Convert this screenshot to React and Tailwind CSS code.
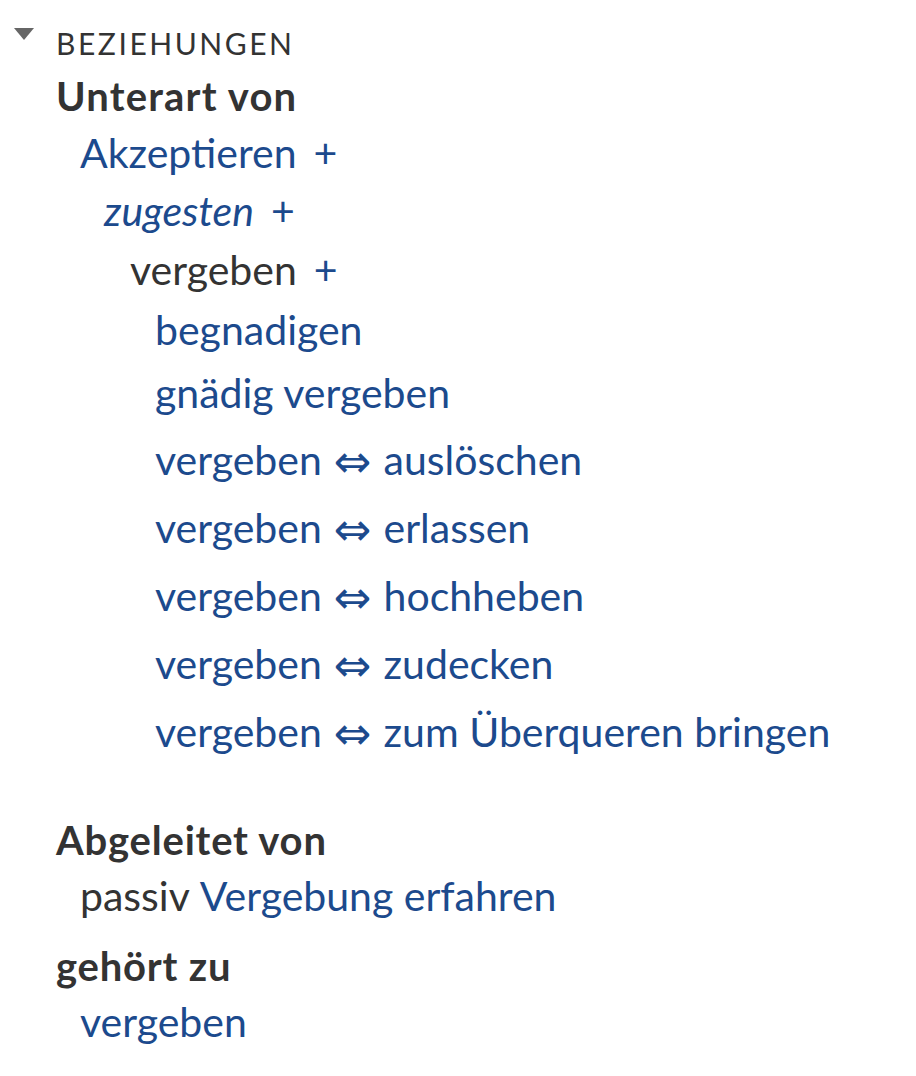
import React from 'react';

const BLUE = 'text-[#1c4a8d]';

// one line of the relation tree, height fixed so rows keep their rhythm
const Row = ({ h, indent, children }) => (
  <div className={`flex items-center whitespace-nowrap ${h} ${indent}`}>{children}</div>
);

const Plus = () => <span className={`${BLUE} ml-[17px]`}>+</span>;

const Arrow = ({ to }) => (
  <span className={`${BLUE} flex items-center`}>
    <span>vergeben</span>
    <span className="font-['DejaVu_Sans'] text-[45px] leading-none mx-[12px] relative top-[1px]">⇔</span>
    <span>{to}</span>
  </span>
);

export default function App() {
  const pairs = ['auslöschen', 'erlassen', 'hochheben', 'zudecken', 'zum Überqueren bringen'];

  return (
    <div className="w-[916px] h-[1076px] bg-white text-[#333333] font-['Lato','Liberation_Sans',sans-serif] text-[41px] pt-[18px]">
      {/* section header with collapse caret */}
      <div className="flex items-center h-[50px]">
        <span className="w-0 h-0 ml-[14px] border-l-[10px] border-r-[10px] border-t-[12px] border-l-transparent border-r-transparent border-t-[#666666] self-start mt-[10px]" />
        <span className="ml-[22px] text-[30px] tracking-[0.085em] text-[#333333]">BEZIEHUNGEN</span>
      </div>

      <div className="pl-[56px]">
        <Row h="h-[56px]" indent="">
          <span className="font-bold text-[40px] tracking-[0.03em]">Unterart von</span>
        </Row>
        <Row h="h-[58px]" indent="pl-[24px]">
          <span className={BLUE}>Akzeptieren</span>
          <Plus />
        </Row>
        <Row h="h-[58px]" indent="pl-[48px]">
          <span className={`${BLUE} italic`}>zugesten</span>
          <Plus />
        </Row>
        <Row h="h-[60px]" indent="pl-[74px]">
          <span>vergeben</span>
          <Plus />
        </Row>
        <Row h="h-[60px]" indent="pl-[99px]">
          <span className={BLUE}>begnadigen</span>
        </Row>
        <Row h="h-[66px]" indent="pl-[99px]">
          <span className={BLUE}>gnädig vergeben</span>
        </Row>
        {pairs.map((p) => (
          <Row key={p} h="h-[68px]" indent="pl-[99px]">
            <Arrow to={p} />
          </Row>
        ))}

        <div className="mt-[46px]">
          <Row h="h-[56px]" indent="">
            <span className="font-bold text-[40px] tracking-[0.02em]">Abgeleitet von</span>
          </Row>
          <Row h="h-[56px]" indent="pl-[24px]">
            <span>passiv</span>
            <span className={`${BLUE} ml-[10px]`}>Vergebung erfahren</span>
          </Row>
        </div>

        <div className="mt-[14px]">
          <Row h="h-[56px]" indent="">
            <span className="font-bold text-[40px] tracking-[0.02em]">gehört zu</span>
          </Row>
          <Row h="h-[56px]" indent="pl-[24px]">
            <span className={BLUE}>vergeben</span>
          </Row>
        </div>
      </div>
    </div>
  );
}
